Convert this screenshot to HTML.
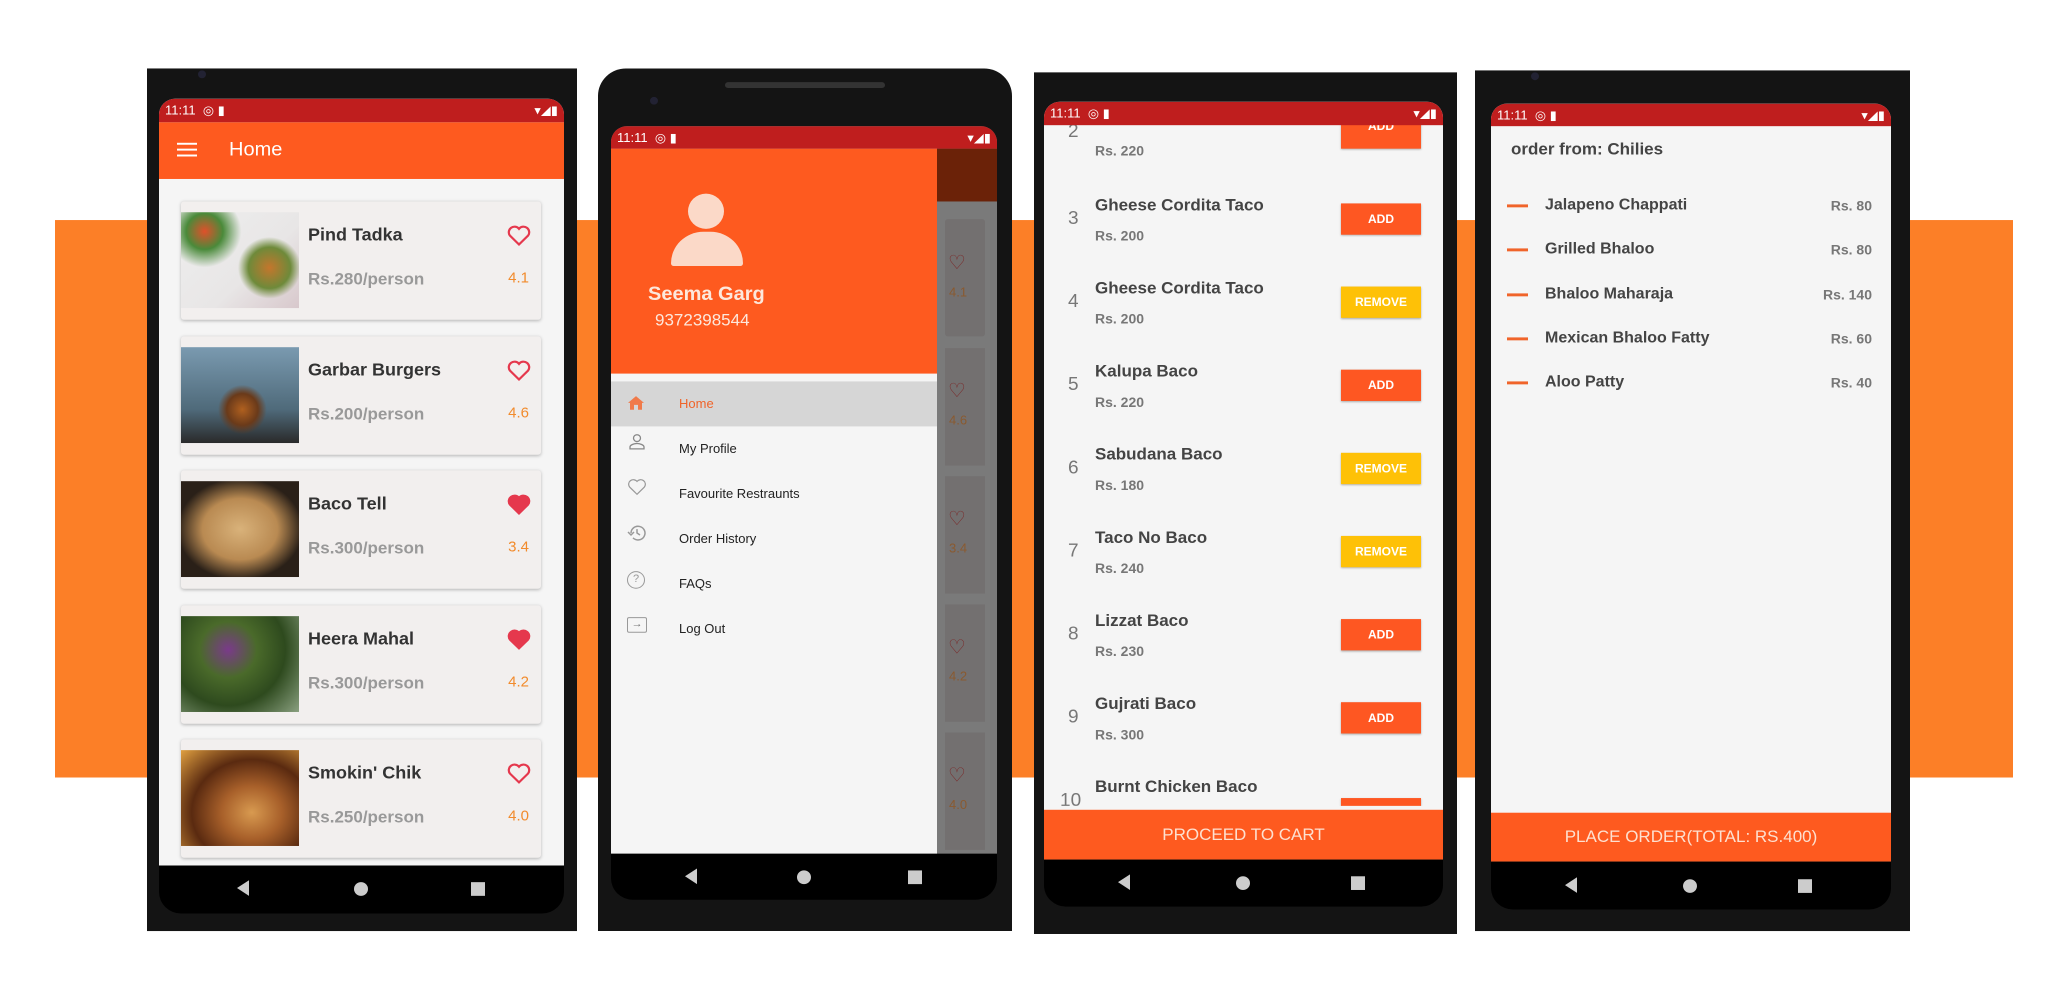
<!DOCTYPE html>
<html><head><meta charset="utf-8"><style>
*{margin:0;padding:0;box-sizing:border-box}
body{width:2048px;height:1000px;background:#fff;position:relative;overflow:hidden;font-family:"Liberation Sans",sans-serif}
#w{position:absolute;left:0;top:0;width:2048px;height:1023px;transform:scaleY(0.978);transform-origin:0 0}
.a{position:absolute}
.band{left:55px;top:225px;width:1958px;height:570px;background:#fc7f27}
.phone{background:#141414}
.scr{background:#f5f5f5;overflow:hidden;border-radius:16px 16px 0 0}
.sb{background:#bf1e1e;color:#fff;font-size:13px;height:24px;line-height:24px;padding-left:6px;position:relative;z-index:5}
.nav{background:#000;border-radius:0 0 22px 22px}
.tri{width:0;height:0;border-top:8px solid transparent;border-bottom:8px solid transparent;border-right:12px solid #ccc}
.dot{width:14px;height:14px;border-radius:50%;background:#ccc}
.sq{width:14px;height:14px;background:#ccc}
.card{left:22px;width:360px;height:121px;background:#f2efee;border-radius:3px;box-shadow:0 1px 3px rgba(0,0,0,.25)}
.card .img{left:0;top:11px;width:118px;height:98px}
.card .t{left:127px;top:24px;font-size:18px;font-weight:bold;color:#333}
.card .p{left:127px;top:70px;font-size:17px;font-weight:bold;color:#999}
.card .r{right:12px;top:70px;font-size:15px;color:#f28b2c}
.card .h{right:10px;top:24px}
.btn{left:297px;width:80px;height:32px;color:#fff;font-size:12px;font-weight:bold;text-align:center;line-height:32px;box-shadow:0 1px 2px rgba(0,0,0,.3)}
.add{background:#fe5722}.rem{background:#fec107}
.it .n{left:24px;font-size:19px;color:#777}
.it .t{left:51px;font-size:17px;font-weight:bold;color:#444}
.it .p{left:51px;font-size:14px;font-weight:bold;color:#777}
.mi{left:68px;font-size:13px;color:#222}
.ol .d{left:16px;width:21px;height:3px;background:#f0642a}
.ol .t{left:54px;font-size:16px;font-weight:bold;color:#444}
.ol .p{right:19px;font-size:14px;font-weight:bold;color:#777}
</style></head><body><div id="w">
<div class="a band"></div>

<!-- Phone 1 -->
<div class="a phone" style="left:147px;top:70px;width:430px;height:882px"></div>
<div class="a" style="left:198px;top:72px;width:8px;height:8px;border-radius:50%;background:#223"></div>
<div class="a scr" style="left:159px;top:101px;width:405px;height:784px">
 <div class="sb">11:11 &nbsp;◎ ▮<span style="float:right;padding-right:6px">▾◢▮</span></div>
 <div class="a" style="left:0;top:24px;width:405px;height:58px;background:#fe5a1f;color:#fff">
  <div class="a" style="left:18px;top:21px;width:20px;height:2px;background:#fff;box-shadow:0 6px 0 #fff,0 12px 0 #fff"></div>
  <div class="a" style="left:70px;top:17px;font-size:20px">Home</div>
 </div>
 <div class="a card" style="top:105px"><div class="a img" style="background:radial-gradient(circle at 75% 58%,#c4762c 0,#6e8a3a 20%,transparent 30%),radial-gradient(circle at 20% 20%,#e0502a 0,#4a8a3a 15%,transparent 30%),linear-gradient(135deg,#eee 0,#e8e6e6 60%,#d8c8cc 100%)"></div><div class="a t">Pind Tadka</div><div class="a p">Rs.280/person</div><div class="a r">4.1</div><svg class="a h" width="24" height="22" viewBox="0 0 24 22"><path d="M12 20 3 11A5 5 0 0 1 12 4 5 5 0 0 1 21 11Z" fill="none" stroke="#e5384d" stroke-width="2.2"/></svg></div>
 <div class="a card" style="top:243px"><div class="a img" style="background:radial-gradient(ellipse at 52% 65%,#b0601f 0,#6a3a1a 18%,transparent 28%),linear-gradient(180deg,#7a9ab0,#4f6a7a 65%,#2a2a2a)"></div><div class="a t">Garbar Burgers</div><div class="a p">Rs.200/person</div><div class="a r">4.6</div><svg class="a h" width="24" height="22" viewBox="0 0 24 22"><path d="M12 20 3 11A5 5 0 0 1 12 4 5 5 0 0 1 21 11Z" fill="none" stroke="#e5384d" stroke-width="2.2"/></svg></div>
 <div class="a card" style="top:380px"><div class="a img" style="background:radial-gradient(ellipse at 50% 50%,#d9b27a 0,#b98a52 45%,#2a2018 75%)"></div><div class="a t">Baco Tell</div><div class="a p">Rs.300/person</div><div class="a r">3.4</div><svg class="a h" width="24" height="22" viewBox="0 0 24 22"><path d="M12 20 3 11A5 5 0 0 1 12 4 5 5 0 0 1 21 11Z" fill="#e5384d" stroke="#e5384d" stroke-width="2.2"/></svg></div>
 <div class="a card" style="top:518px"><div class="a img" style="background:radial-gradient(circle at 40% 35%,#7a3a8a 0,#4a6a2a 30%,#2e4a1e 60%,#8aa080 100%)"></div><div class="a t">Heera Mahal</div><div class="a p">Rs.300/person</div><div class="a r">4.2</div><svg class="a h" width="24" height="22" viewBox="0 0 24 22"><path d="M12 20 3 11A5 5 0 0 1 12 4 5 5 0 0 1 21 11Z" fill="#e5384d" stroke="#e5384d" stroke-width="2.2"/></svg></div>
 <div class="a card" style="top:655px"><div class="a img" style="background:radial-gradient(ellipse at 60% 65%,#d89a50 0,#a8602a 30%,#5a2a10 60%,#e0a040 100%)"></div><div class="a t">Smokin' Chik</div><div class="a p">Rs.250/person</div><div class="a r">4.0</div><svg class="a h" width="24" height="22" viewBox="0 0 24 22"><path d="M12 20 3 11A5 5 0 0 1 12 4 5 5 0 0 1 21 11Z" fill="none" stroke="#e5384d" stroke-width="2.2"/></svg></div>
</div>
<div class="a nav" style="left:159px;top:885px;width:405px;height:49px"></div>
<div class="a tri" style="left:237px;top:900px"></div><div class="a dot" style="left:354px;top:902px"></div><div class="a sq" style="left:471px;top:902px"></div>

<!-- Phone 2 -->
<div class="a phone" style="left:598px;top:70px;width:414px;height:882px;border-radius:28px 28px 0 0"></div>
<div class="a" style="left:725px;top:84px;width:160px;height:6px;border-radius:3px;background:#333"></div>
<div class="a" style="left:650px;top:99px;width:8px;height:8px;border-radius:50%;background:#223"></div>
<div class="a scr" style="left:611px;top:129px;width:386px;height:744px;background:#7a7a7a">
 <div class="sb" style="height:23px;line-height:23px">11:11 &nbsp;◎ ▮<span style="float:right;padding-right:6px">▾◢▮</span></div>
 <div class="a" style="left:326px;top:23px;width:60px;height:54px;background:#6b2208"></div>
 <div class="a" style="left:334px;top:95px;width:40px;height:120px;background:#737070;border-radius:3px"></div>
 <div class="a" style="left:334px;top:227px;width:40px;height:120px;background:#737070"></div>
 <div class="a" style="left:334px;top:358px;width:40px;height:120px;background:#737070"></div>
 <div class="a" style="left:334px;top:489px;width:40px;height:120px;background:#737070"></div>
 <div class="a" style="left:334px;top:620px;width:40px;height:120px;background:#737070"></div>
 <div class="a" style="left:337px;top:127px;color:#7a2a2a;font-size:20px">♡</div><div class="a" style="left:338px;top:162px;color:#8a5a30;font-size:13px">4.1</div>
 <div class="a" style="left:337px;top:258px;color:#7a2a2a;font-size:20px">♡</div><div class="a" style="left:338px;top:293px;color:#8a5a30;font-size:13px">4.6</div>
 <div class="a" style="left:337px;top:389px;color:#7a2a2a;font-size:20px">♡</div><div class="a" style="left:338px;top:424px;color:#8a5a30;font-size:13px">3.4</div>
 <div class="a" style="left:337px;top:520px;color:#7a2a2a;font-size:20px">♡</div><div class="a" style="left:338px;top:555px;color:#8a5a30;font-size:13px">4.2</div>
 <div class="a" style="left:337px;top:651px;color:#7a2a2a;font-size:20px">♡</div><div class="a" style="left:338px;top:686px;color:#8a5a30;font-size:13px">4.0</div>
 <div class="a" style="left:0;top:23px;width:326px;height:721px;background:#f5f5f5">
  <div class="a" style="left:0;top:0;width:326px;height:230px;background:#fe5a1f">
   <div class="a" style="left:77px;top:46px;width:36px;height:36px;border-radius:50%;background:#fbd9c8"></div>
   <div class="a" style="left:60px;top:85px;width:72px;height:35px;border-radius:36px 36px 3px 3px;background:#fbd9c8"></div>
   <div class="a" style="left:37px;top:138px;color:#fde8dc;font-size:20px;font-weight:bold">Seema Garg</div>
   <div class="a" style="left:44px;top:166px;color:#fde8dc;font-size:17px">9372398544</div>
  </div>
  <div class="a" style="left:0;top:238px;width:326px;height:46px;background:#d6d6d6"></div>
  <svg class="a" style="left:16px;top:252px" width="18" height="16" viewBox="0 0 18 16"><path d="M9 1 1 8h2v7h4v-5h4v5h4V8h2Z" fill="#f07a4a"/></svg>
  <div class="a mi" style="top:253px;color:#f0642a">Home</div>
  <svg class="a" style="left:17px;top:291px" width="18" height="18" viewBox="0 0 18 18"><circle cx="9" cy="5" r="3.5" fill="none" stroke="#888" stroke-width="1.3"/><path d="M2 16v-2c0-2 4-3.5 7-3.5s7 1.5 7 3.5v2Z" fill="none" stroke="#888" stroke-width="1.3"/></svg>
  <div class="a mi" style="top:299px">My Profile</div>
  <svg class="a" style="left:16px;top:337px" width="20" height="18" viewBox="0 0 24 22"><path d="M12 20 3 11A5 5 0 0 1 12 4 5 5 0 0 1 21 11Z" fill="none" stroke="#999" stroke-width="1.5"/></svg>
  <div class="a mi" style="top:345px">Favourite Restraunts</div>
  <svg class="a" style="left:16px;top:383px" width="20" height="20" viewBox="0 0 20 20"><path d="M4 10A7 7 0 1 1 6 15" fill="none" stroke="#999" stroke-width="1.5"/><path d="M10 6v4l3 2" fill="none" stroke="#999" stroke-width="1.5"/><path d="M1 9l3 3 3-3" fill="none" stroke="#999" stroke-width="1.5"/></svg>
  <div class="a mi" style="top:391px">Order History</div>
  <div class="a" style="left:16px;top:432px;width:18px;height:18px;border:1.5px solid #999;border-radius:50%;font-size:11px;color:#999;text-align:center;line-height:15px">?</div><div class="a mi" style="top:437px">FAQs</div>
  <div class="a" style="left:16px;top:479px;width:20px;height:16px;border:1.5px solid #999;border-radius:2px;font-size:11px;color:#777;text-align:center;line-height:12px">→</div><div class="a mi" style="top:483px">Log Out</div>
 </div>
</div>
<div class="a nav" style="left:611px;top:873px;width:386px;height:47px"></div>
<div class="a tri" style="left:685px;top:888px"></div><div class="a dot" style="left:797px;top:890px"></div><div class="a sq" style="left:908px;top:890px"></div>

<!-- Phone 3 -->
<div class="a phone" style="left:1034px;top:74px;width:423px;height:881px"></div>
<div class="a scr" style="left:1044px;top:104px;width:399px;height:775px">
 <div class="sb">11:11 &nbsp;◎ ▮<span style="float:right;padding-right:6px">▾◢▮</span></div>
 <div class="it">
  <div class="a n" style="top:20px">2</div><div class="a p" style="top:42px">Rs. 220</div><div class="a btn add" style="top:14px;line-height:22px;height:34px">ADD</div>
  <div class="a n" style="top:109px">3</div><div class="a t" style="top:96px">Gheese Cordita Taco</div><div class="a p" style="top:129px">Rs. 200</div><div class="a btn add" style="top:104px">ADD</div>
  <div class="a n" style="top:194px">4</div><div class="a t" style="top:181px">Gheese Cordita Taco</div><div class="a p" style="top:214px">Rs. 200</div><div class="a btn rem" style="top:189px">REMOVE</div>
  <div class="a n" style="top:279px">5</div><div class="a t" style="top:266px">Kalupa Baco</div><div class="a p" style="top:299px">Rs. 220</div><div class="a btn add" style="top:274px">ADD</div>
  <div class="a n" style="top:364px">6</div><div class="a t" style="top:351px">Sabudana Baco</div><div class="a p" style="top:384px">Rs. 180</div><div class="a btn rem" style="top:359px">REMOVE</div>
  <div class="a n" style="top:449px">7</div><div class="a t" style="top:436px">Taco No Baco</div><div class="a p" style="top:469px">Rs. 240</div><div class="a btn rem" style="top:444px">REMOVE</div>
  <div class="a n" style="top:534px">8</div><div class="a t" style="top:521px">Lizzat Baco</div><div class="a p" style="top:554px">Rs. 230</div><div class="a btn add" style="top:529px">ADD</div>
  <div class="a n" style="top:619px">9</div><div class="a t" style="top:606px">Gujrati Baco</div><div class="a p" style="top:639px">Rs. 300</div><div class="a btn add" style="top:614px">ADD</div>
  <div class="a" style="left:0;top:670px;width:399px;height:50px;overflow:hidden"><div class="a n" style="top:34px;left:16px">10</div><div class="a t" style="top:21px">Burnt Chicken Baco</div><div class="a btn add" style="top:42px">ADD</div></div>
 </div>
 <div class="a" style="left:0;top:724px;width:399px;height:51px;background:#fe5a1f;color:#fde0d0;font-size:17px;text-align:center;line-height:51px">PROCEED TO CART</div>
</div>
<div class="a nav" style="left:1044px;top:879px;width:399px;height:48px"></div>
<div class="a tri" style="left:1118px;top:894px"></div><div class="a dot" style="left:1236px;top:896px"></div><div class="a sq" style="left:1351px;top:896px"></div>

<!-- Phone 4 -->
<div class="a phone" style="left:1475px;top:72px;width:435px;height:880px"></div>
<div class="a" style="left:1531px;top:74px;width:8px;height:8px;border-radius:50%;background:#223"></div>
<div class="a scr" style="left:1491px;top:106px;width:400px;height:775px">
 <div class="sb" style="height:23px;line-height:23px">11:11 &nbsp;◎ ▮<span style="float:right;padding-right:6px">▾◢▮</span></div>
 <div class="a" style="left:20px;top:37px;font-size:17px;font-weight:bold;color:#444">order from: Chilies</div>
 <div class="ol">
  <div class="a d" style="top:103px"></div><div class="a t" style="top:95px">Jalapeno Chappati</div><div class="a p" style="top:96px">Rs. 80</div>
  <div class="a d" style="top:148px"></div><div class="a t" style="top:140px">Grilled Bhaloo</div><div class="a p" style="top:141px">Rs. 80</div>
  <div class="a d" style="top:194px"></div><div class="a t" style="top:186px">Bhaloo Maharaja</div><div class="a p" style="top:187px">Rs. 140</div>
  <div class="a d" style="top:239px"></div><div class="a t" style="top:231px">Mexican Bhaloo Fatty</div><div class="a p" style="top:232px">Rs. 60</div>
  <div class="a d" style="top:284px"></div><div class="a t" style="top:276px">Aloo Patty</div><div class="a p" style="top:277px">Rs. 40</div>
 </div>
 <div class="a" style="left:0;top:725px;width:400px;height:50px;background:#fe5a1f;color:#fde0d0;font-size:17px;text-align:center;line-height:50px">PLACE ORDER(TOTAL: RS.400)</div>
</div>
<div class="a nav" style="left:1491px;top:881px;width:400px;height:49px"></div>
<div class="a tri" style="left:1565px;top:897px"></div><div class="a dot" style="left:1683px;top:899px"></div><div class="a sq" style="left:1798px;top:899px"></div>
</div></body></html>
